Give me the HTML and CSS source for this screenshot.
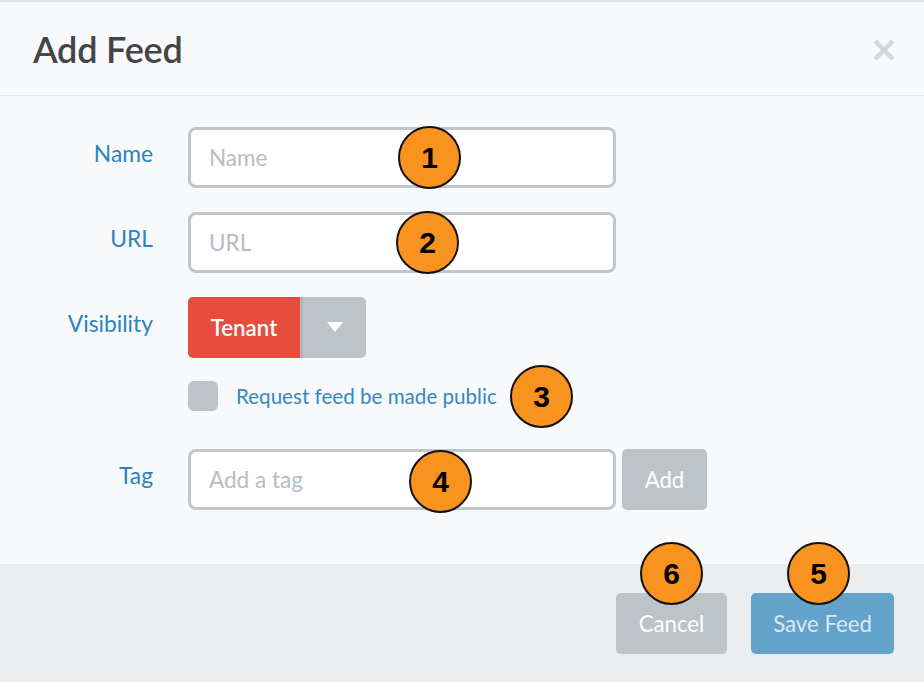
FILE: index.html
```html
<!DOCTYPE html>
<html lang="en">
<head>
<meta charset="utf-8">
<title>Add Feed</title>
<link rel="stylesheet" href="styles.css">
</head>
<body>
<div class="modal">
  <header class="modal-header">
    <h1 class="title">Add Feed</h1>
    <button class="close" type="button" aria-label="Close">
      <svg width="24" height="24" viewBox="0 0 24 24"><path d="M3 3 L21 21 M21 3 L3 21" stroke="#d3d6da" stroke-width="4.5" stroke-linecap="butt" fill="none"/></svg>
    </button>
  </header>
  <div class="modal-body">
    <div class="row">
      <label class="label">Name</label>
      <input class="input" type="text" placeholder="Name">
    </div>
    <div class="row">
      <label class="label">URL</label>
      <input class="input" type="text" placeholder="URL">
    </div>
    <div class="row">
      <label class="label">Visibility</label>
      <div class="split">
        <button class="split-main" type="button">Tenant</button>
        <button class="split-toggle" type="button" aria-label="Toggle"><span class="caret"></span></button>
      </div>
    </div>
    <div class="row row-check">
      <span></span>
      <label class="check"><span class="box"></span><span class="check-text">Request feed be made public</span></label>
    </div>
    <div class="row row-tag">
      <label class="label">Tag</label>
      <div class="tag-field">
        <input class="input" type="text" placeholder="Add a tag">
        <button class="btn btn-add" type="button">Add</button>
      </div>
    </div>
  </div>
  <footer class="modal-footer">
    <button class="btn btn-cancel" type="button">Cancel</button>
    <button class="btn btn-save" type="button">Save Feed</button>
  </footer>
  <span class="marker m1">1</span>
  <span class="marker m2">2</span>
  <span class="marker m3">3</span>
  <span class="marker m4">4</span>
  <span class="marker m5">5</span>
  <span class="marker m6">6</span>
</div>
</body>
</html>
```
FILE: styles.css
```css
* { box-sizing: border-box; }
html, body { margin: 0; padding: 0; }
body {
  width: 924px;
  height: 682px;
  overflow: hidden;
  font-family: Lato, "Noto Sans", sans-serif;
  background: #ebecee;
}
.modal {
  position: relative;
  width: 924px;
  height: 682px;
  background: #f8f9fb;
  border-top: 2px solid #e4e5e8;
  display: flex;
  flex-direction: column;
}
.modal-header {
  height: 94px;
  border-bottom: 1px solid #e6e8eb;
  display: flex;
  align-items: center;
  justify-content: space-between;
  padding: 0 28px 0 33px;
}
.title {
  margin: 0;
  font-size: 36px;
  font-weight: 600;
  color: #454545;
  letter-spacing: -0.2px;
}
.close {
  border: 0;
  background: none;
  padding: 0;
  width: 24px;
  height: 24px;
  margin-top: 2px;
  cursor: pointer;
}
.close svg { display: block; }
.modal-body {
  flex: 1;
  padding-top: 31px;
}
.row {
  display: grid;
  grid-template-columns: 153px 428px;
  column-gap: 35px;
  margin-bottom: 24px;
}
.label {
  text-align: right;
  color: #2d83bf;
  font-size: 22.8px;
  line-height: 26px;
  padding-top: 13px;
}
.input {
  width: 428px;
  height: 61px;
  border: 3px solid #c1c6cb;
  border-radius: 8px;
  background: #fff;
  padding: 0 18px;
  font-family: Lato, sans-serif;
  font-size: 22.5px;
  color: #333;
  outline: none;
}
.input::placeholder { color: #b4bdc6; }
.split {
  display: flex;
  height: 61px;
}
.split-main {
  width: 112px;
  height: 61px;
  border: 0;
  border-radius: 5px 0 0 5px;
  background: #e74c3c;
  color: #fff;
  font-family: Lato, sans-serif;
  font-size: 22.3px;
  font-weight: 600;
  padding: 0;
}
.split-toggle {
  width: 66px;
  height: 61px;
  border: 0;
  border-left: 3px solid #aeb4b9;
  border-radius: 0 5px 5px 0;
  background: #bdc3c7;
  display: flex;
  align-items: center;
  justify-content: center;
  padding: 0 0 2px 0;
}
.caret {
  width: 0;
  height: 0;
  border-left: 8px solid transparent;
  border-right: 8px solid transparent;
  border-top: 10px solid #fff;
}
.row-check {
  margin-top: -1px;
  margin-bottom: 0;
}
.check {
  display: flex;
  align-items: center;
  gap: 18px;
  height: 30px;
}
.box {
  width: 30px;
  height: 30px;
  border-radius: 6px;
  background: #bdc3c7;
}
.check-text {
  color: #3589c3;
  font-size: 20.6px;
  line-height: 24px;
}
.row-tag {
  margin-top: 38px;
  grid-template-columns: 153px auto;
}
.tag-field {
  display: flex;
  gap: 6px;
}
.btn {
  border: 0;
  border-radius: 5px;
  height: 61px;
  font-family: Lato, sans-serif;
  font-size: 22.2px;
  color: #fff;
  padding: 0;
}
.btn-add {
  width: 85px;
  background: #bdc3c7;
}
.modal-footer {
  height: 118px;
  background: #ebecee;
  display: flex;
  justify-content: flex-end;
  gap: 24px;
  padding: 29px 30px 0 0;
}
.btn-cancel {
  width: 111px;
  background: #bdc3c7;
}
.btn-save {
  width: 143px;
  background: #64a3c9;
  color: #dce9f3;
}
.marker {
  position: absolute;
  width: 63px;
  height: 63px;
  border-radius: 50%;
  background: #f7931e;
  border: 2px solid #111;
  display: flex;
  align-items: center;
  justify-content: center;
  font-family: "Liberation Sans", Arial, sans-serif;
  font-weight: 700;
  font-size: 30px;
  color: #000;
}
.m1 { left: 398px; top: 124px; }
.m2 { left: 396px; top: 209px; }
.m3 { left: 510px; top: 363px; }
.m4 { left: 409px; top: 448px; }
.m5 { left: 787px; top: 540px; }
.m6 { left: 640px; top: 540px; }
```
